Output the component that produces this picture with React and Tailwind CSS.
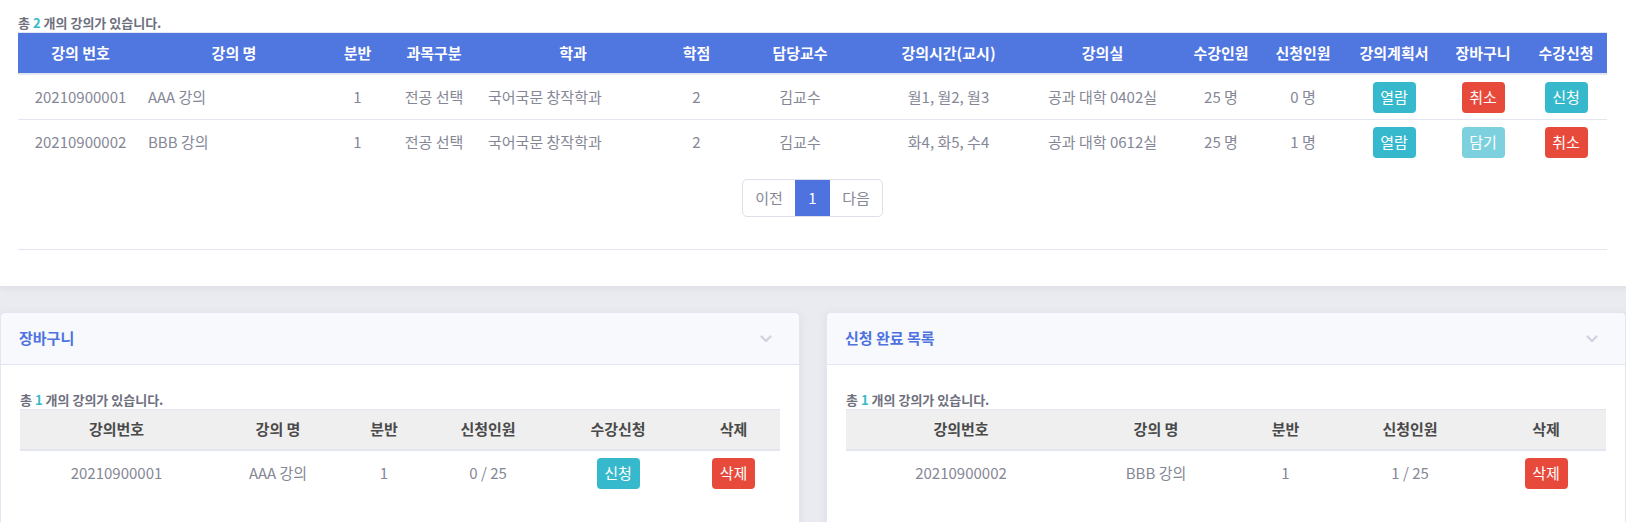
import React from 'react';

const courses = [
  { no: '20210900001', name: 'AAA 강의', cls: '1', type: '전공 선택', dept: '국어국문 창작학과', credit: '2', prof: '김교수', time: '월1, 월2, 월3', room: '공과 대학 0402실', cap: '25 명', applied: '0 명', cart: 'cancel', apply: 'apply' },
  { no: '20210900002', name: 'BBB 강의', cls: '1', type: '전공 선택', dept: '국어국문 창작학과', credit: '2', prof: '김교수', time: '화4, 화5, 수4', room: '공과 대학 0612실', cap: '25 명', applied: '1 명', cart: 'add', apply: 'cancel' },
];

const topGrid = 'grid grid-cols-[125px_182px_65px_88px_190px_57px_150px_147px_161px_76px_88px_94px_84px_82px]';

const headCells = ['강의 번호', '강의 명', '분반', '과목구분', '학과', '학점', '담당교수', '강의시간(교시)', '강의실', '수강인원', '신청인원', '강의계획서', '장바구니', '수강신청'];

const Btn = ({ color, children }) => {
  const colors = {
    info: 'bg-[#36b9cc]',
    danger: 'bg-[#e74a3b]',
    muted: 'bg-[#7dd1de]',
  };
  return (
    <span className={`inline-flex h-[31px] w-[43px] items-center justify-center rounded-[4px] text-[15px] text-white ${colors[color]}`}>
      {children}
    </span>
  );
};

const Chevron = () => (
  <svg width="12" height="8" viewBox="0 0 12 8" fill="none">
    <polyline points="1.5,1.5 6,6 10.5,1.5" stroke="#d1d3e2" strokeWidth="2.4" strokeLinecap="round" strokeLinejoin="round" />
  </svg>
);

const Caption = ({ count }) => (
  <p className="text-[13px] font-bold leading-[18px] text-[#6e707e]">
    총 <span className="text-[#36b9cc]">{count}</span> 개의 강의가 있습니다.
  </p>
);

const Panel = ({ title, children }) => (
  <div className="min-h-[240px] rounded-[5px] border border-[#e3e6f0] bg-white shadow-[0_2px_8px_rgba(58,59,69,0.08)]">
    <div className="flex h-[52px] items-center justify-between rounded-t-[5px] border-b border-[#e3e6f0] bg-[#f8f9fc] pl-[18px] pr-[27px]">
      <h6 className="text-[15px] font-bold text-[#4e73df]">{title}</h6>
      <Chevron />
    </div>
    <div className="px-[19px] pt-[26px]">{children}</div>
  </div>
);

export default function App() {
  return (
    <div className="min-h-screen bg-[#eaebf0] font-['Noto_Sans_CJK_KR','Noto_Sans',sans-serif] text-[#858796]">
      <div className="bg-white pl-[18px] pr-[19px] pt-[14px] pb-[36px] shadow-[0_3px_6px_rgba(58,59,69,0.06)]">
        <Caption count={2} />

        <div className={`${topGrid} h-[43px] border-t border-b-2 border-[#e3e6f0] bg-[#5076e0] text-[15px] font-bold text-white`}>
          {headCells.map((label) => (
            <div key={label} className="flex items-center justify-center">{label}</div>
          ))}
        </div>

        {courses.map((c, i) => (
          <div
            key={c.no}
            className={`${topGrid} h-[45px] items-center text-[15px] ${i === 0 ? 'border-b border-[#e3e6f0]' : ''}`}
          >
            <div className="text-center">{c.no}</div>
            <div className="pl-[5px] text-left">{c.name}</div>
            <div className="text-center">{c.cls}</div>
            <div className="text-center">{c.type}</div>
            <div className="pl-[10px] text-left">{c.dept}</div>
            <div className="text-center">{c.credit}</div>
            <div className="text-center">{c.prof}</div>
            <div className="text-center">{c.time}</div>
            <div className="text-center">{c.room}</div>
            <div className="text-center">{c.cap}</div>
            <div className="text-center">{c.applied}</div>
            <div className="flex justify-center">
              <Btn color="info">열람</Btn>
            </div>
            <div className="flex justify-center">
              {c.cart === 'cancel' ? <Btn color="danger">취소</Btn> : <Btn color="muted">담기</Btn>}
            </div>
            <div className="flex justify-center">
              {c.apply === 'apply' ? <Btn color="info">신청</Btn> : <Btn color="danger">취소</Btn>}
            </div>
          </div>
        ))}

        <div className="mt-[14px] flex justify-center">
          <div className="flex h-[38px] overflow-hidden rounded-[5px] border border-[#dddfeb] text-[15px]">
            <span className="flex w-[52px] items-center justify-center">이전</span>
            <span className="flex w-[35px] items-center justify-center bg-[#4e73df] text-white">1</span>
            <span className="flex w-[52px] items-center justify-center">다음</span>
          </div>
        </div>

        <hr className="mt-[32px] border-t border-[#e3e6f0]" />
      </div>

      <div className="grid grid-cols-2 gap-[26px] pt-[26px]">
        <Panel title="장바구니">
          <Caption count={1} />
          <div className="grid h-[42px] grid-cols-[193px_130px_82px_126px_134px_97px] items-center border-t border-b-2 border-[#e3e6f0] bg-[#efefef] text-center text-[15px] font-bold text-[#4a4a4a]">
            <div>강의번호</div>
            <div>강의 명</div>
            <div>분반</div>
            <div>신청인원</div>
            <div>수강신청</div>
            <div>삭제</div>
          </div>
          <div className="grid h-[44px] grid-cols-[193px_130px_82px_126px_134px_97px] items-center text-center text-[15px]">
            <div>20210900001</div>
            <div>AAA 강의</div>
            <div>1</div>
            <div>0 / 25</div>
            <div className="flex justify-center">
              <Btn color="info">신청</Btn>
            </div>
            <div className="flex justify-center">
              <Btn color="danger">삭제</Btn>
            </div>
          </div>
        </Panel>

        <Panel title="신청 완료 목록">
          <Caption count={1} />
          <div className="grid h-[42px] grid-cols-[230px_160px_99px_150px_122px] items-center border-t border-b-2 border-[#e3e6f0] bg-[#efefef] text-center text-[15px] font-bold text-[#4a4a4a]">
            <div>강의번호</div>
            <div>강의 명</div>
            <div>분반</div>
            <div>신청인원</div>
            <div>삭제</div>
          </div>
          <div className="grid h-[44px] grid-cols-[230px_160px_99px_150px_122px] items-center text-center text-[15px]">
            <div>20210900002</div>
            <div>BBB 강의</div>
            <div>1</div>
            <div>1 / 25</div>
            <div className="flex justify-center">
              <Btn color="danger">삭제</Btn>
            </div>
          </div>
        </Panel>
      </div>
    </div>
  );
}
